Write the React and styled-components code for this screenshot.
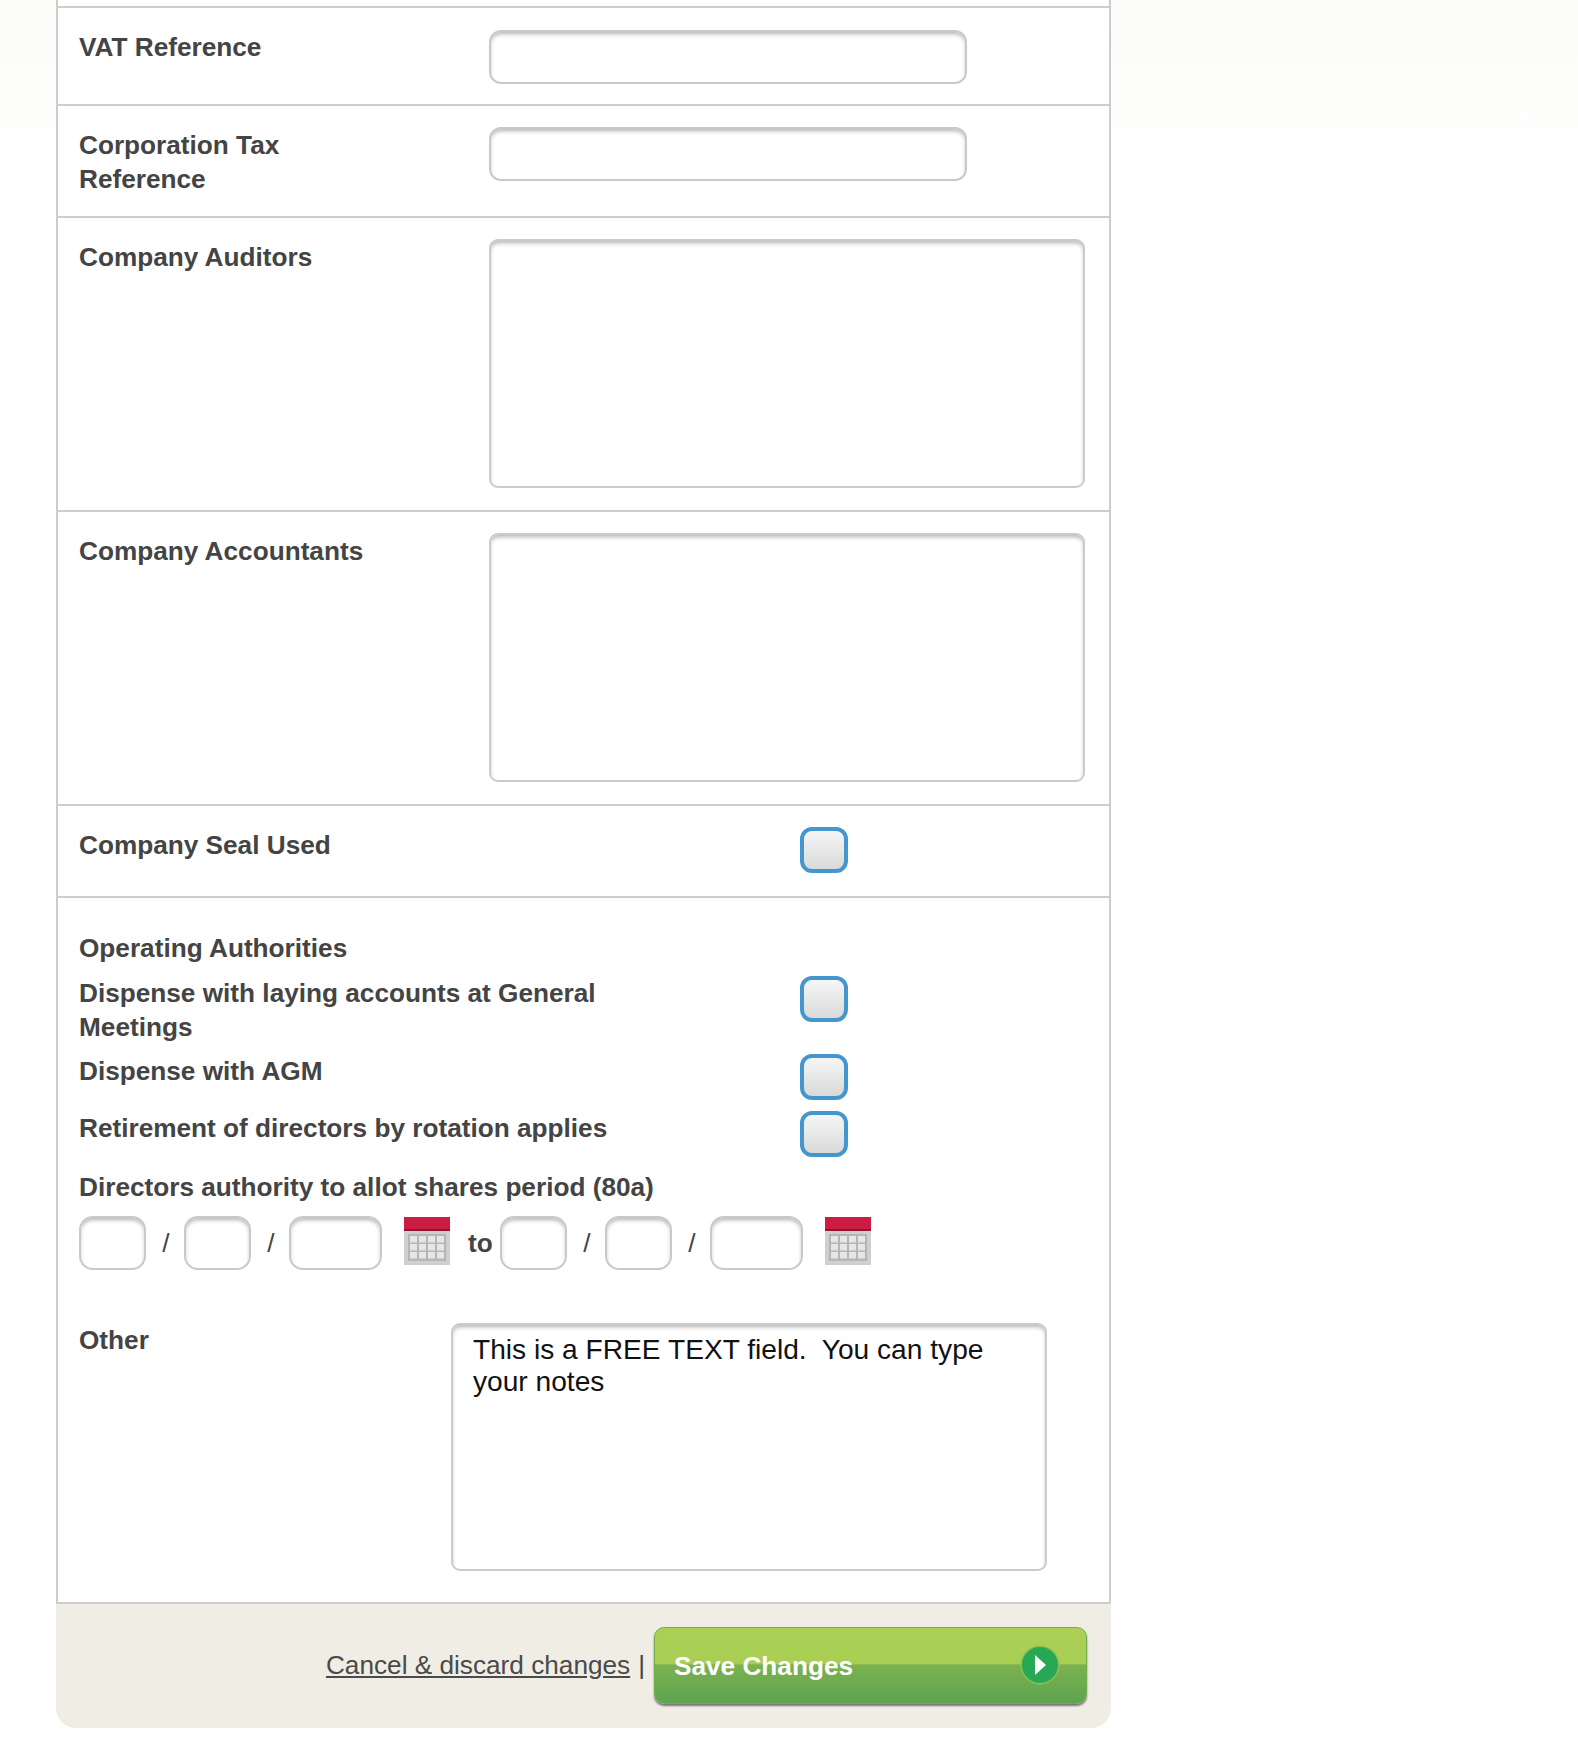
import React from "react";
import styled, { createGlobalStyle } from "styled-components";

const GlobalStyle = createGlobalStyle`
 html, body {
  margin: 0;
  padding: 0;
  background: linear-gradient(#fbfbf8 0, #fdfdfc 90px, #ffffff 190px) no-repeat;
  font-family: "Liberation Sans", Arial, sans-serif;
 }
`;

const Page = styled.div`
 width: 1578px;
 height: 1764px;
 overflow: hidden;
 padding-left: 56px;
 box-sizing: border-box;
`;

const Panel = styled.form`
 width: 1055px;
`;

// the part of the row above that is scrolled off the top of the page
const TopStub = styled.div`
 height: 6px;
 background: #fff;
 border: solid #cdcdcd;
 border-width: 0 2px;
`;

const Row = styled.div`
 display: grid;
 grid-template-columns: ${(p) => p.$labelWidth || 410}px 1fr;
 background: #fff;
 border: 2px solid #cdcdcd;
 border-bottom: 0;
 padding: ${(p) => p.$top ?? 21}px 0 ${(p) => p.$bottom ?? 22}px 21px;
`;

const Label = styled.label`
 display: block;
 max-width: ${(p) => p.$max || 300}px;
 padding-top: ${(p) => p.$offset || 0}px;
 color: #444;
 font-size: 26.2px;
 line-height: 34px;
 font-weight: bold;
`;

const TextInput = styled.input`
 display: block;
 box-sizing: border-box;
 width: ${(p) => p.$width || 478}px;
 height: 54px;
 padding: 0 10px;
 border: 2px solid #c9c9c9;
 border-radius: 12px;
 background: #fff;
 box-shadow: inset 0 3px 4px -1px rgba(0, 0, 0, 0.3);
 outline: none;
`;

const TextArea = styled.textarea`
 display: block;
 box-sizing: border-box;
 width: 596px;
 height: ${(p) => p.$height || 249}px;
 padding: 9px 20px;
 border: 2px solid #cbcbcb;
 border-radius: 9px;
 background: #fff;
 box-shadow: inset 0 3px 4px -1px rgba(0, 0, 0, 0.3);
 outline: none;
 resize: none;
 overflow: hidden;
 color: #111;
 font-family: "Liberation Sans", Arial, sans-serif;
 font-size: 28.15px;
 line-height: 32px;
`;

const Check = styled.input.attrs({ type: "checkbox" })`
 appearance: none;
 display: block;
 box-sizing: border-box;
 margin: 0;
 width: 48px;
 height: 46px;
 border: 4px solid #4496cf;
 border-radius: 12px;
 background: linear-gradient(#f6f6f6, #d9d9d9);
`;

const Authorities = styled.div`
 display: flex;
 flex-direction: column;
 background: #fff;
 border: 2px solid #cdcdcd;
 border-bottom: 0;
 padding: 33px 0 31px 21px;
`;

const CheckRow = styled.div`
 display: grid;
 grid-template-columns: 721px 48px;
 align-items: start;
 margin-top: ${(p) => p.$top}px;
`;

const CheckLabel = styled(Label)`
 max-width: 620px;
`;

const PeriodLabel = styled(Label)`
 max-width: 800px;
 margin-top: 13px;
`;

const DateRow = styled.div`
 display: flex;
 align-items: center;
 margin-top: 12px;
 color: #444;
`;

const DateInput = styled(TextInput)`
 width: ${(p) => p.$width}px;
 padding: 0 6px;
 border-radius: 14px;
`;

const Slash = styled.span`
 width: 38px;
 box-sizing: border-box;
 padding-left: 2px;
 text-align: center;
 font-size: 26.2px;
 color: #444;
`;

const CalendarWrap = styled.span`
 display: block;
 align-self: flex-start;
 margin: 1px 0 0 22px;
 height: 48px;
`;

const To = styled.span`
 width: 50px;
 box-sizing: border-box;
 padding-left: 18px;
 font-size: 26.2px;
 font-weight: bold;
`;

const OtherRow = styled.div`
 display: grid;
 grid-template-columns: 372px 596px;
 margin-top: 53px;
`;

const Footer = styled.div`
 display: flex;
 justify-content: flex-end;
 align-items: center;
 height: 126px;
 box-sizing: border-box;
 padding: 0 24px 2px 0;
 background: #f0ede5;
 border-top: 2px solid #cdcdcd;
 border-radius: 0 0 20px 20px;
 color: #444;
 font-size: 26.2px;
`;

const CancelLink = styled.a`
 color: #4a4a4a;
 text-decoration: underline;
`;

const Divider = styled.span`
 margin: 0 9px 0 8px;
`;

const SaveButton = styled.button`
 display: flex;
 align-items: center;
 justify-content: space-between;
 box-sizing: border-box;
 width: 433px;
 height: 77px;
 padding: 0 26px 0 19px;
 border: 1px solid #6fae4c;
 border-radius: 10px;
 background: linear-gradient(#abd055 0, #a9ce54 48%, #7cb150 49%, #5da550 100%);
 box-shadow: 0 2px 2px rgba(0, 0, 0, 0.5);
 color: #fff;
 font-family: "Liberation Sans", Arial, sans-serif;
 font-size: 26.2px;
 font-weight: bold;
`;

const SaveText = styled.span`
 padding-top: 3px;
`;

const CalendarIcon = () => (
 <svg width="46" height="48" viewBox="0 0 46 48">
  <rect x="0" y="0" width="46" height="48" fill="#cfcfcf" />
  <rect x="0" y="0" width="46" height="13" fill="#cd1c44" />
  <rect x="0" y="12" width="46" height="2" fill="#8e1732" />
  <rect x="4" y="17" width="38" height="27" fill="#b5b5b5" />
  {[0, 1, 2, 3].map((c) =>
   [0, 1, 2].map((r) => <rect key={`${c}-${r}`} x={6 + c * 9} y={19 + r * 8} width="7" height="6.5" fill="#e6e6e6" />),
  )}
 </svg>
);

const PlayIcon = () => (
 <svg width="40" height="40" viewBox="0 0 40 40">
  <circle cx="20" cy="20" r="19.5" fill="#8cc152" />
  <circle cx="20" cy="20" r="18" fill="#27a855" />
  <path d="M15 10 L26 20 L15 30 Z" fill="#ffffff" />
 </svg>
);

const DateGroup = () => (
 <>
  <DateInput $width={67} />
  <Slash>/</Slash>
  <DateInput $width={67} />
  <Slash>/</Slash>
  <DateInput $width={93} />
  <CalendarWrap>
   <CalendarIcon />
  </CalendarWrap>
 </>
);

export default function App() {
 return (
  <Page>
   <GlobalStyle />
   <Panel>
    <TopStub />
    <Row $top={22} $bottom={20}>
     <Label>VAT Reference</Label>
     <TextInput />
    </Row>
    <Row $bottom={20}>
     <Label $offset={1}>Corporation Tax Reference</Label>
     <TextInput />
    </Row>
    <Row>
     <Label $offset={1}>Company Auditors</Label>
     <TextArea />
    </Row>
    <Row>
     <Label $offset={1}>Company Accountants</Label>
     <TextArea />
    </Row>
    <Row $labelWidth={721} $bottom={23}>
     <Label $max={600} $offset={1}>
      Company Seal Used
     </Label>
     <Check />
    </Row>
    <Authorities>
     <Label $max={600}>Operating Authorities</Label>
     <CheckRow $top={11}>
      <CheckLabel>Dispense with laying accounts at General Meetings</CheckLabel>
      <Check />
     </CheckRow>
     <CheckRow $top={10}>
      <CheckLabel>Dispense with AGM</CheckLabel>
      <Check />
     </CheckRow>
     <CheckRow $top={11}>
      <CheckLabel>Retirement of directors by rotation applies</CheckLabel>
      <Check />
     </CheckRow>
     <PeriodLabel>Directors authority to allot shares period (80a)</PeriodLabel>
     <DateRow>
      <DateGroup />
      <To>to</To>
      <DateGroup />
     </DateRow>
     <OtherRow>
      <Label>Other</Label>
      <TextArea $height={248} defaultValue={"This is a FREE TEXT field.  You can type your notes"} />
     </OtherRow>
    </Authorities>
    <Footer>
     <CancelLink href="#">Cancel &amp; discard changes</CancelLink>
     <Divider>|</Divider>
     <SaveButton type="button">
      <SaveText>Save Changes</SaveText>
      <PlayIcon />
     </SaveButton>
    </Footer>
   </Panel>
  </Page>
 );
}
